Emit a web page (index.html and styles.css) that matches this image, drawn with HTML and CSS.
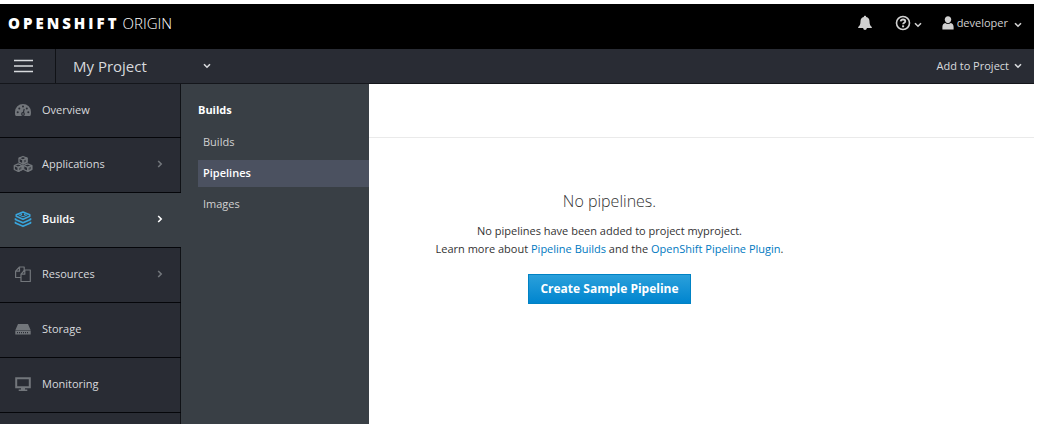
FILE: index.html
```html
<!DOCTYPE html>
<html lang="en">
<head>
<meta charset="utf-8">
<title>OpenShift Origin - Pipelines</title>
<link rel="stylesheet" href="styles.css">
</head>
<body>
<svg class="sprite" aria-hidden="true">
  <symbol id="down" viewBox="0 0 8 6"><path d="M1 1.200l3 3 3-3" fill="none" stroke="currentColor" stroke-width="1.600"/></symbol>
  <symbol id="right" viewBox="0 0 6 8"><path d="M1.200 1l3 3-3 3" fill="none" stroke="currentColor" stroke-width="1.600"/></symbol>
</svg>
<div class="app">
  <header class="masthead">
    <a class="brand" href="#"><b class="brand-name">OPENSHIFT</b> <span class="brand-edition">ORIGIN</span></a>
    <nav class="utility" aria-label="Account">
      <button class="tool tool-bell" aria-label="Notifications"><svg width="14" height="16" viewBox="0 0 14 16" fill="currentColor"><path d="M7 .8c.8 0 1.100.5 1.200 1.100 2.200.5 3.300 2.200 3.300 4.300 0 2.800.7 4.500 2.300 5.800v1H.2v-1c1.600-1.300 2.300-3 2.300-5.800 0-2.100 1.100-3.800 3.300-4.300C5.900 1.300 6.200.8 7 .8z"/><path d="M5.200 13h3.600c0 1.200-.8 2-1.800 2s-1.800-.8-1.800-2z"/></svg></button>
      <button class="tool tool-help" aria-label="Help"><svg width="16" height="16" viewBox="0 0 16 16" fill="none" stroke="currentColor"><circle cx="8" cy="8" r="6.500" stroke-width="1.600"/><path d="M5.700 6.400c.2-1.300 1.100-1.900 2.300-1.900 1.300 0 2.300.7 2.300 1.800 0 1.500-2.200 1.400-2.200 3" stroke-width="1.800"/><path d="M7.100 11.300h2" stroke-width="1.900"/></svg><svg class="caret" width="8" height="6"><use href="#down"/></svg></button>
      <button class="tool tool-user"><svg width="12" height="14" viewBox="0 0 12 14" fill="currentColor"><path d="M6 .3c2 0 3.200 1.400 3.200 3.300S8 7.200 6 7.200 2.800 5.500 2.800 3.600 4 .3 6 .3z"/><path d="M.4 13.500v-2.600C.4 8.700 1.500 7.400 3.200 7c.8.700 1.700 1 2.800 1s2-.3 2.800-1c1.700.4 2.800 1.700 2.800 3.900v2.600z"/></svg><span>developer</span><svg class="caret" width="8" height="6"><use href="#down"/></svg></button>
    </nav>
  </header>
  <div class="projectbar">
    <button class="burger" aria-label="Toggle navigation"><svg width="20" height="14" viewBox="0 0 20 14"><path d="M0 1.500h19M0 7h19M0 12.500h19" stroke="currentColor" stroke-width="1.500"/></svg></button>
    <button class="project">My Project<svg width="8" height="6"><use href="#down"/></svg></button>
    <button class="add">Add to Project<svg width="8" height="6"><use href="#down"/></svg></button>
  </div>
  <div class="body">
    <nav class="sidebar" aria-label="Main">
      <a class="item" href="#"><svg class="icon" viewBox="0 0 20 18"><path d="M2.900 15C1.900 14 2 12.500 2 11a8 8 0 0 1 16 0c0 1.500 0 3-.9 4z" fill="currentColor"/><g fill="#292c34"><circle cx="4.700" cy="11.300" r="1"/><circle cx="6.300" cy="7.500" r="1"/><circle cx="10" cy="5.500" r="1"/><circle cx="13.800" cy="7.500" r="1"/><circle cx="15.300" cy="11.300" r="1"/><circle cx="10" cy="13" r="1.900"/></g><path d="M10 13l1.200-5" stroke="#292c34" stroke-width="1.100"/><circle cx="10" cy="13" r=".8" fill="currentColor"/></svg><span>Overview</span></a>
      <a class="item" href="#"><svg class="icon" viewBox="0 0 20 18" fill="none" stroke="currentColor" stroke-width="1.300" stroke-linejoin="round"><g id="cube"><path d="M10 1.500l4 1.700v4L10 9 6 7.200v-4z"/><path d="M6 3.200L10 5l4-1.800M10 5v4"/><path d="M10 5l4-1.800v4L10 9z" fill="currentColor" fill-opacity=".45"/></g><use href="#cube" x="-4.700" y="7.300"/><use href="#cube" x="4.700" y="7.300"/></svg><span>Applications</span><svg class="arrow" width="6" height="8"><use href="#right"/></svg></a>
      <a class="item item-active" href="#" aria-current="true"><svg class="icon" viewBox="0 0 20 18" fill="none" stroke="currentColor" stroke-width="1.500" stroke-linejoin="round"><path d="M10 2l6.800 2.700v1.500L10 9.200 3.200 6.200V4.700z"/><path d="M5.500 4.800L10 6.800l4.500-2" stroke-width="1"/><path d="M7.500 4.300h1.600M11 4.300h1.600" stroke-width="1.500"/><path d="M2.500 8.200v1.300l7.500 3.300 7.500-3.300V8.200M2.500 11.700V13l7.500 3.300 7.500-3.300v-1.300" stroke-width="1.700"/></svg><span>Builds</span><svg class="arrow" width="6" height="8"><use href="#right"/></svg></a>
      <a class="item" href="#"><svg class="icon" viewBox="0 0 20 18" fill="none" stroke="currentColor" stroke-width="1.200" stroke-linejoin="round"><path d="M8 12.500H2.600V6.200L6.500 2h4.700v4M6.500 2v4.200H2.600"/><path d="M8 16.500V9.200L11.800 5h5.500v11.500zM11.800 5v4.200H8"/></svg><span>Resources</span><svg class="arrow" width="6" height="8"><use href="#right"/></svg></a>
      <a class="item" href="#"><svg class="icon" viewBox="0 0 20 18"><path d="M5 4h10l2.600 6H2.400zM2.300 10.600h15.400v3.900H2.300z" fill="currentColor"/><path d="M4 12.600h12" stroke="#292c34" stroke-width="1.200" stroke-dasharray="1 1"/></svg><span>Storage</span></a>
      <a class="item" href="#"><svg class="icon" viewBox="0 0 20 18"><path d="M3.200 3.300h13.600v8.900H3.200z" fill="none" stroke="currentColor" stroke-width="2"/><path d="M8 13h4v1.500h2.300V16H5.700v-1.500H8z" fill="currentColor"/></svg><span>Monitoring</span></a>
    </nav>
    <main class="content">
      <div class="page-head"></div>
      <section class="empty">
        <h1 class="empty-title">No pipelines.</h1>
        <p class="empty-text">No pipelines have been added to project myproject.<br>Learn more about <a href="#">Pipeline Builds</a> and the <a href="#">OpenShift Pipeline Plugin</a>.</p>
        <button class="primary">Create Sample Pipeline</button>
      </section>
    </main>
    <nav class="submenu" aria-label="Builds">
      <h2 class="submenu-title">Builds</h2>
      <a class="subitem" href="#">Builds</a>
      <a class="subitem subitem-active" href="#" aria-current="page">Pipelines</a>
      <a class="subitem" href="#">Images</a>
    </nav>
  </div>
</div>
</body>
</html>
```
FILE: styles.css
```css
* { box-sizing: border-box; }
body {
  margin: 0;
  background: #fff;
  color: #333;
  font: 11px/18px "Open Sans", "Noto Sans", sans-serif;
}
a { color: #0079c1; text-decoration: none; }
button {
  margin: 0;
  padding: 0;
  border: 0;
  background: none;
  color: inherit;
  font: inherit;
  cursor: pointer;
}
svg { flex: none; }
.sprite { position: absolute; width: 0; height: 0; }

.app {
  display: flex;
  flex-direction: column;
  min-height: 100vh;
  padding: 4px 27px 8px 0;
}

.masthead {
  display: flex;
  justify-content: space-between;
  align-items: flex-start;
  height: 45px;
  padding: 9px 12px 0 8px;
  background: #000;
  color: #d1d1d1;
}
.brand { display: flex; gap: 3px; color: #fff; font-size: 15px; line-height: 20px; }
.brand-name { font-weight: 800; letter-spacing: 3px; }
.brand-edition { font-weight: 300; }
.utility { display: flex; align-items: center; height: 20px; gap: 20px; }
.tool { display: flex; align-items: center; gap: 3px; }
.tool-bell { margin-right: 3px; }
.caret { margin-top: 4px; }
.tool-user .caret { margin-left: 3px; }

.projectbar {
  display: flex;
  height: 35px;
  border-bottom: 1px solid #14161b;
  background: #292c34;
  color: #d8dadd;
}
.burger {
  display: flex;
  align-items: center;
  width: 56px;
  padding-left: 14px;
  border-right: 1px solid #101216;
}
.project {
  display: flex;
  align-items: center;
  justify-content: space-between;
  width: 155px;
  padding-left: 17px;
  font-size: 15px;
}
.add { display: flex; align-items: center; gap: 5px; margin: 0 12px 0 auto; }

.body { position: relative; display: flex; flex: 1; }
.sidebar {
  flex: none;
  width: 181px;
  box-shadow: inset -1px 0 #101216;
  background: #292c34;
}
.item {
  display: flex;
  align-items: center;
  gap: 9px;
  height: 55px;
  padding: 0 18px 2px 13px;
  border-bottom: 1px solid #05060a;
  color: #d8dadd;
}
.item:first-child { height: 54px; }
.icon { width: 20px; height: 18px; color: #72767b; }
.arrow { margin-left: auto; color: #72767b; }
.item-active { background: #393f45; color: #fff; font-weight: 600; }
.item-active .icon { color: #39a5dc; }
.item-active .arrow { color: #fff; }

/* Flyout that opens over the page content */
.submenu {
  position: absolute;
  top: 0;
  bottom: 0;
  left: 181px;
  width: 188px;
  padding: 17px 0 0 17px;
  background: #393f45;
}
.submenu-title { margin: 0 0 10px; color: #fff; font-size: 11px; font-weight: 700; line-height: 18px; }
.subitem {
  display: block;
  margin-bottom: 4px;
  padding: 4px 5px 5px;
  color: #d1d1d1;
}
.subitem-active { background: #4b5160; color: #fff; font-weight: 600; }

.content { flex: 1; }
.page-head { height: 54px; border-bottom: 1px solid #eaeaea; }
.empty { padding: 52px 16px 16px 20px; text-align: center; }
.empty-title { margin: 0 0 10px; font-size: 16px; font-weight: 300; line-height: 22px; }
.empty-text { margin: 0 0 16px; line-height: 18px; }
.primary {
  height: 30px;
  padding: 0 11px;
  border: 1px solid #0082c4;
  background: linear-gradient(#2ba0db, #0085cf);
  color: #fff;
  font-size: 12px;
  font-weight: 700;
}
```
